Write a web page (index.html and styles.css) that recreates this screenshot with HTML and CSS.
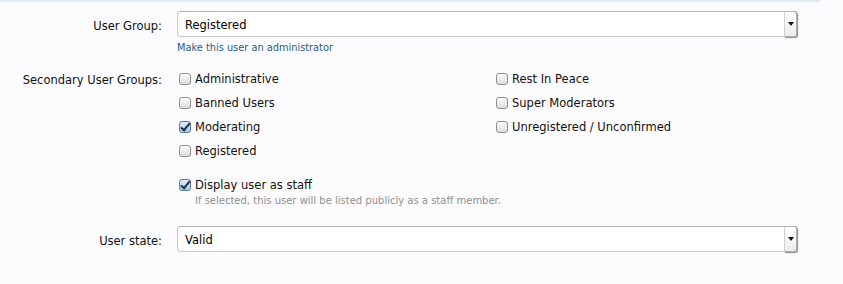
FILE: index.html
```html
<html>

<head>
  <link rel="stylesheet" href="styles.css">
</head>

<body>
  <div class="topline"></div>
  <form class="xenform">
    <dl class="ctrl-unit">
      <dt><label>User Group:</label></dt>
      <dd>
        <div class="select">
          <span class="select-value">Registered</span>
          <span class="select-arrow"></span>
        </div>
        <a class="explain-link" href="#">Make this user an administrator</a>
      </dd>
    </dl>

    <dl class="ctrl-unit groups">
      <dt><label>Secondary User Groups:</label></dt>
      <dd>
        <ul class="checkbox-columns">
          <li><label><span class="checkbox"></span>Administrative</label></li>
          <li><label><span class="checkbox"></span>Rest In Peace</label></li>
          <li><label><span class="checkbox"></span>Banned Users</label></li>
          <li><label><span class="checkbox"></span>Super Moderators</label></li>
          <li><label><span class="checkbox checked"></span>Moderating</label></li>
          <li><label><span class="checkbox"></span>Unregistered / Unconfirmed</label></li>
          <li><label><span class="checkbox"></span>Registered</label></li>
        </ul>
      </dd>
    </dl>

    <dl class="ctrl-unit staff">
      <dt></dt>
      <dd>
        <label><span class="checkbox checked"></span>Display user as staff</label>
        <p class="hint">If selected, this user will be listed publicly as a staff member.</p>
      </dd>
    </dl>

    <dl class="ctrl-unit state">
      <dt><label>User state:</label></dt>
      <dd>
        <div class="select">
          <span class="select-value">Valid</span>
          <span class="select-arrow"></span>
        </div>
      </dd>
    </dl>
  </form>
</body>

</html>
```

FILE: styles.css
```css
body {
  margin: 0;
  padding: 0;
  background: #fcfcfe;
  font-family: 'DejaVu Sans', sans-serif;
  font-size: 11.5px;
  color: #111;
}

.topline {
  width: 820px;
  height: 2px;
  background: #dcebf3;
}

.xenform {
  margin: 0;
  padding-top: 9px;
}

.ctrl-unit {
  display: grid;
  grid-template-columns: 162px 620px;
  column-gap: 15px;
  margin: 0;
}

.ctrl-unit dt {
  text-align: right;
  padding-top: 8px;
  line-height: 14px;
}

.ctrl-unit dd {
  margin: 0;
}

.select {
  position: relative;
  height: 24px;
  border: 1px solid #c8c8c8;
  border-top-color: #b4b4b4;
  border-radius: 4px 0 0 4px;
  background: #fff;
  display: flex;
  align-items: center;
  padding: 2px 0 0 7px;
  box-sizing: content-box;
  height: 22px;
}

.select-value {
  font-size: 11.5px;
  color: #000;
}

.select-arrow {
  position: absolute;
  right: -1px;
  top: -1px;
  width: 11px;
  height: 24px;
  border: 1px solid #b0b0b0;
  border-left-color: #d0d0d0;
  border-radius: 0 3px 3px 0;
  background: linear-gradient(#ffffff, #ececec);
  box-shadow: 1px 1px 1px #8a8a8a;
}

.select-arrow::after {
  content: '';
  position: absolute;
  left: 3px;
  top: 10px;
  border-left: 3px solid transparent;
  border-right: 3px solid transparent;
  border-top: 4px solid #111;
}

.explain-link {
  display: block;
  margin-top: 5px;
  font-size: 9.8px;
  line-height: 12px;
  color: #2b5a85;
  text-decoration: none;
}

.groups {
  margin-top: 18px;
}

.groups dt {
  padding-top: 1px;
}

.checkbox-columns {
  list-style: none;
  margin: 0;
  padding: 0 0 0 2px;
  display: grid;
  grid-template-columns: 317px 300px;
  row-gap: 10px;
}

.checkbox-columns li,
.staff label {
  display: flex;
  align-items: center;
  line-height: 14px;
}

.checkbox-columns label,
.staff label {
  display: flex;
  align-items: center;
}

.checkbox {
  display: inline-block;
  box-sizing: border-box;
  width: 12px;
  height: 12px;
  margin-right: 4px;
  border: 1px solid #8e8e8e;
  border-radius: 3px;
  background: linear-gradient(#fdfdfd, #dcdcdc);
  position: relative;
}

.checkbox.checked {
  border-color: #5b7a99;
  background: linear-gradient(#dcebf8, #a9c8e6);
}

.checkbox.checked::after {
  content: '';
  position: absolute;
  left: 3px;
  top: -1px;
  width: 3px;
  height: 8px;
  border-right: 2px solid #1d2f44;
  border-bottom: 2px solid #1d2f44;
  transform: rotate(40deg);
}

.staff {
  margin-top: 20px;
}

.staff dd {
  padding-left: 2px;
}

.hint {
  margin: 3px 0 0 16px;
  font-size: 10px;
  line-height: 12px;
  color: #8f8f8f;
}

.state {
  margin-top: 19px;
}
```
